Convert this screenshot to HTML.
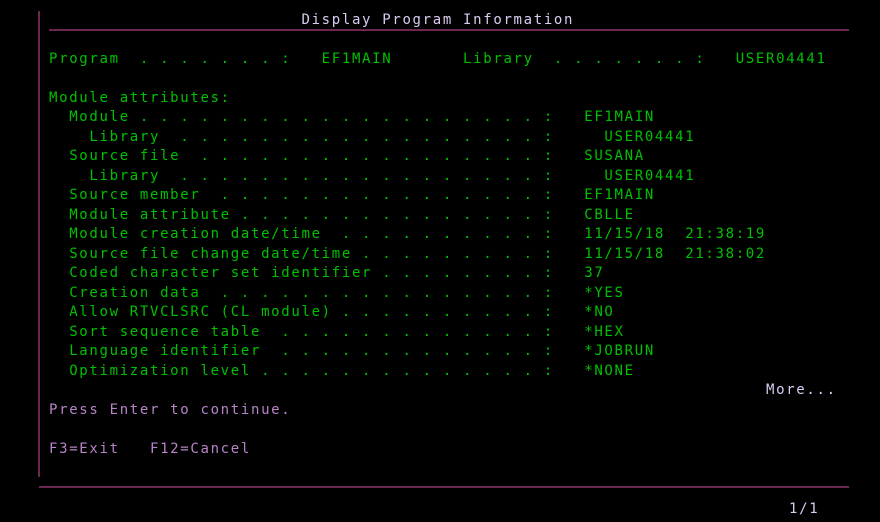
<!DOCTYPE html>
<html><head><meta charset="utf-8"><style>
html,body{margin:0;padding:0;background:#000;}
body{width:880px;height:522px;position:relative;overflow:hidden;}
pre{position:absolute;left:49px;top:10.5px;margin:0;font-family:"DejaVu Sans Mono","Liberation Mono",monospace;font-size:14px;letter-spacing:1.67px;line-height:19.5px;color:#00c000;}
.t{color:#dccbf0}
.p{color:#b784c8}
.vl{position:absolute;left:38px;top:11px;width:2px;height:466px;background:#6a2850;}
.h1{position:absolute;left:49px;top:29px;width:800px;height:2px;background:#6a2850;}
.h2{position:absolute;left:39px;top:486px;width:810px;height:2px;background:#6a2850;}
.pg{position:absolute;left:789px;top:501px;font-family:"DejaVu Sans Mono",monospace;font-size:14px;letter-spacing:1.67px;color:#dccbf0;}
</style></head><body>
<div class="vl"></div><div class="h1"></div><div class="h2"></div>
<pre><span class="t">                         Display Program Information</span>

Program  . . . . . . . :   EF1MAIN       Library  . . . . . . . :   USER04441

Module attributes:
  Module . . . . . . . . . . . . . . . . . . . . :   EF1MAIN
    Library  . . . . . . . . . . . . . . . . . . :     USER04441
  Source file  . . . . . . . . . . . . . . . . . :   SUSANA
    Library  . . . . . . . . . . . . . . . . . . :     USER04441
  Source member  . . . . . . . . . . . . . . . . :   EF1MAIN
  Module attribute . . . . . . . . . . . . . . . :   CBLLE
  Module creation date/time  . . . . . . . . . . :   11/15/18  21:38:19
  Source file change date/time . . . . . . . . . :   11/15/18  21:38:02
  Coded character set identifier . . . . . . . . :   37
  Creation data  . . . . . . . . . . . . . . . . :   *YES
  Allow RTVCLSRC (CL module) . . . . . . . . . . :   *NO
  Sort sequence table  . . . . . . . . . . . . . :   *HEX
  Language identifier  . . . . . . . . . . . . . :   *JOBRUN
  Optimization level . . . . . . . . . . . . . . :   *NONE
<span class="t">                                                                       More...</span>
<span class="p">Press Enter to continue.</span>

<span class="p">F3=Exit   F12=Cancel</span></pre>
<div class="pg">1/1</div>
</body></html>
